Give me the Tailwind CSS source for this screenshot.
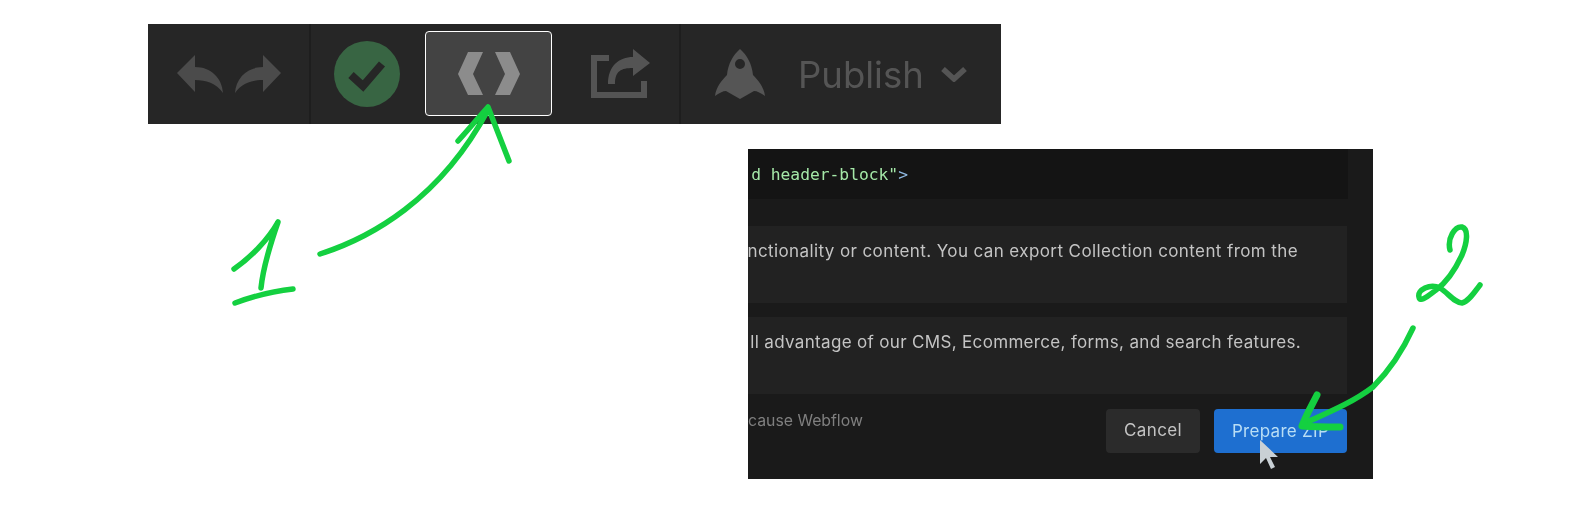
<!DOCTYPE html>
<html>
<head>
  <script src="https://cdn.jsdelivr.net/npm/@tailwindcss/browser@4"></script>
</head>
<body class="bg-white">
  <div class="relative w-[1594px] h-[518px] overflow-hidden font-['Inter',sans-serif]">

    <!-- toolbar -->
    <div class="ml-[148px] mt-6 w-[853px] h-[100px] bg-[#262626] flex items-stretch blur-[0.5px]">
      <div class="w-[163px] border-r-2 border-[#1e1e1e] flex items-center pl-7 gap-[10px]">
        <svg width="48" height="40" viewBox="0 0 48 40"><path d="M1 19 19 1V13C35 13 46 24 47 39 40 29 30 26 19 26V38Z" fill="#4b4b4b"/></svg>
        <svg width="48" height="40" viewBox="0 0 48 40"><path d="M47 19 29 1V13C13 13 2 24 1 39 8 29 18 26 29 26V38Z" fill="#4b4b4b"/></svg>
      </div>
      <div class="w-[370px] border-r-2 border-[#1e1e1e] flex items-center pl-[23px]">
        <svg width="66" height="66" viewBox="0 0 66 66" class="-mt-[1px]"><circle cx="33" cy="33" r="33" fill="#386543"/><path d="M17 34 29 45 48 23" fill="none" stroke="#262626" stroke-width="8"/></svg>
        <div class="ml-[25px] w-[127px] h-[85px] -mt-[1px] bg-[#434343] border border-white rounded flex items-center justify-center">
          <svg width="62" height="44" viewBox="0 0 62 44"><path d="M10 0H25L15 22 25 43H10L0 22ZM37 0H52L62 22 52 43H37L47 22Z" fill="#8c8c8c"/></svg>
        </div>
        <svg width="60" height="50" viewBox="0 0 60 50" class="ml-[39px]"><path d="M18 9H3V46H53V32" fill="none" stroke="#545454" stroke-width="6"/><path d="M42 0 59 14 42 27V19C30 19 24 22 24 35H17C17 17 28 8 42 8Z" fill="#545454"/></svg>
      </div>
      <div class="flex items-center pl-[34px]">
        <svg width="50" height="50" viewBox="0 0 50 50"><path fill-rule="evenodd" d="M25 0C32 6 37 15 38 26 43 31 49 38 50 47 46 44 42 42 39 42L25 50 11 42C8 42 4 44 0 47 1 38 7 31 12 26 13 15 18 6 25 0ZM25 10A5 5 0 1 0 25 20 5 5 0 1 0 25 10Z" fill="#555"/></svg>
        <span class="ml-[33px] mt-[2px] text-[36.5px] leading-none text-[#555]">Publish</span>
        <svg width="26" height="15" viewBox="0 0 26 15" class="ml-[17px]"><path d="M2 2 13 12 24 2" fill="none" stroke="#555" stroke-width="5.5"/></svg>
      </div>
    </div>

    <!-- export dialog -->
    <div class="ml-[748px] mt-[25px] w-[625px] h-[330px] bg-[#1a1a1a] overflow-hidden blur-[0.6px]">
      <div class="h-[50px] pt-[3px] bg-[#141414] w-[600px] flex items-center justify-end pr-[440px] font-['DejaVu_Sans_Mono',monospace] text-[16.3px] font-medium whitespace-nowrap text-[#a5e8a8]">
        <span>d header-block"<span class="text-[#8fb8e0]">&gt;</span></span>
      </div>
      <div class="w-[599px] h-[77px] mt-[27px] bg-[#222222] flex justify-end pr-[49px] pt-[13px] text-[17px] tracking-[0.4px] leading-[24px] text-[#c4c4c4] whitespace-nowrap">
        nctionality or content. You can export Collection content from the
      </div>
      <div class="w-[599px] h-[77px] mt-[14px] bg-[#222222] flex justify-end pr-[46px] pt-[13px] text-[17px] tracking-[0.33px] leading-[24px] text-[#c4c4c4] whitespace-nowrap">
        ll advantage of our CMS, Ecommerce, forms, and search features.
      </div>
      <div class="w-[599px] mt-[15px] flex items-start">
        <span class="text-[15.8px] leading-[24px] text-[#7f7f7f] whitespace-nowrap">cause Webflow</span>
        <button class="ml-auto w-[94px] h-[44px] bg-[#2b2b2b] rounded-sm text-[17px] tracking-[0.4px] text-[#c4c4c4]">Cancel</button>
        <button class="ml-[14px] w-[133px] h-[44px] pt-[2px] bg-[#1e6fd0] rounded-sm text-[17px] tracking-[0.3px] text-[#b9def5]">Prepare ZIP</button>
      </div>
    </div>

    <!-- hand drawn annotations and cursor -->
    <svg class="absolute inset-0" width="1594" height="518" viewBox="0 0 1594 518" fill="none" stroke="#14d040" stroke-width="5.5" stroke-linecap="round" stroke-linejoin="round">
      <path d="M1260 440V464L1266 458 1271 469 1275 467 1270 457 1278 457Z" fill="#c9d0d5" stroke="none"/>
      <path d="M320 254C370 238 440 200 488 110"/>
      <path d="M458 141C468 130 478 118 488 107 495 125 502 143 509 161"/>
      <path d="M234 269C250 258 268 240 278 222 270 245 263 268 261 288"/>
      <path d="M235 303C254 296 274 291 293 289"/>
      <path d="M1413 328C1402 352 1390 370 1373 387 1352 403 1327 413 1303 424"/>
      <path d="M1317 395C1312 405 1306 415 1302 426 1315 427 1328 427 1340 427" stroke-width="7"/>
      <path d="M1450 250C1447 238 1455 226 1462 227 1469 229 1467 243 1462 255 1455 270 1447 282 1436 290 1428 296 1420 303 1419 297 1417 290 1430 283 1440 288 1448 293 1455 303 1462 303 1468 302 1474 293 1480 285"/>
    </svg>
  </div>
</body>
</html>
